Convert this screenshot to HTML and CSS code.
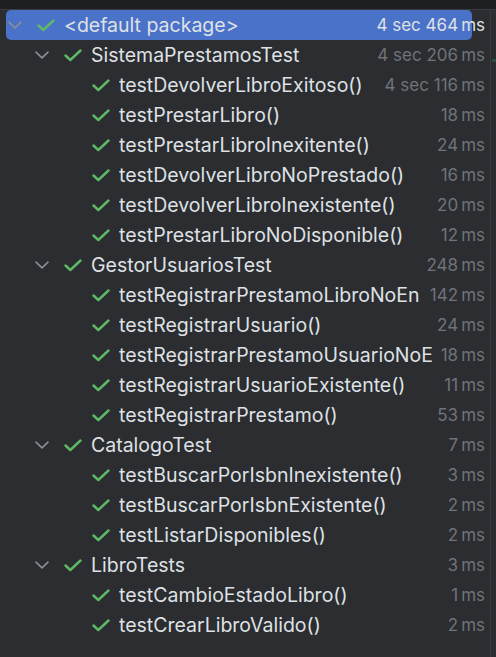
FILE: index.html
```html
<!DOCTYPE html>
<html>
<head>
<meta charset="utf-8">
<link rel="stylesheet" href="styles.css">
</head>
<body>
<svg width="0" height="0" class="defs">
  <defs>
    <symbol id="chev" viewBox="0 0 14 8"><path d="M1 1.2 L7 6.8 L13 1.2" fill="none" stroke="#8b8e95" stroke-width="1.6" stroke-linecap="round" stroke-linejoin="round"/></symbol>
    <symbol id="ok" viewBox="0 0 18 13"><path d="M1.5 6.5 L6.3 11 L16.5 1.5" fill="none" stroke="#5fb865" stroke-width="2.4" stroke-linecap="round" stroke-linejoin="round"/></symbol>
  </defs>
</svg>
<div class="topbar"></div>
<div class="panel">
  <div class="tree">
    <div class="row l0 selected"><svg class="chev"><use href="#chev"/></svg><svg class="ok"><use href="#ok"/></svg><span class="name">&lt;default package&gt;</span><span class="time">4 sec 464<span class="u">ms</span></span></div>

    <div class="row l1"><svg class="chev"><use href="#chev"/></svg><svg class="ok"><use href="#ok"/></svg><span class="name">SistemaPrestamosTest</span><span class="time">4 sec 206<span class="u">ms</span></span></div>
    <div class="row l2"><svg class="ok"><use href="#ok"/></svg><span class="name">testDevolverLibroExitoso()</span><span class="time">4 sec 116<span class="u">ms</span></span></div>
    <div class="row l2"><svg class="ok"><use href="#ok"/></svg><span class="name">testPrestarLibro()</span><span class="time">18<span class="u">ms</span></span></div>
    <div class="row l2"><svg class="ok"><use href="#ok"/></svg><span class="name">testPrestarLibroInexitente()</span><span class="time">24<span class="u">ms</span></span></div>
    <div class="row l2"><svg class="ok"><use href="#ok"/></svg><span class="name">testDevolverLibroNoPrestado()</span><span class="time">16<span class="u">ms</span></span></div>
    <div class="row l2"><svg class="ok"><use href="#ok"/></svg><span class="name">testDevolverLibroInexistente()</span><span class="time">20<span class="u">ms</span></span></div>
    <div class="row l2"><svg class="ok"><use href="#ok"/></svg><span class="name">testPrestarLibroNoDisponible()</span><span class="time">12<span class="u">ms</span></span></div>

    <div class="row l1"><svg class="chev"><use href="#chev"/></svg><svg class="ok"><use href="#ok"/></svg><span class="name">GestorUsuariosTest</span><span class="time">248<span class="u">ms</span></span></div>
    <div class="row l2"><svg class="ok"><use href="#ok"/></svg><span class="name">testRegistrarPrestamoLibroNoEn</span><span class="time">142<span class="u">ms</span></span></div>
    <div class="row l2"><svg class="ok"><use href="#ok"/></svg><span class="name">testRegistrarUsuario()</span><span class="time">24<span class="u">ms</span></span></div>
    <div class="row l2"><svg class="ok"><use href="#ok"/></svg><span class="name">testRegistrarPrestamoUsuarioNoE</span><span class="time">18<span class="u">ms</span></span></div>
    <div class="row l2"><svg class="ok"><use href="#ok"/></svg><span class="name">testRegistrarUsuarioExistente()</span><span class="time">11<span class="u">ms</span></span></div>
    <div class="row l2"><svg class="ok"><use href="#ok"/></svg><span class="name">testRegistrarPrestamo()</span><span class="time">53<span class="u">ms</span></span></div>

    <div class="row l1"><svg class="chev"><use href="#chev"/></svg><svg class="ok"><use href="#ok"/></svg><span class="name">CatalogoTest</span><span class="time">7<span class="u">ms</span></span></div>
    <div class="row l2"><svg class="ok"><use href="#ok"/></svg><span class="name">testBuscarPorIsbnInexistente()</span><span class="time">3<span class="u">ms</span></span></div>
    <div class="row l2"><svg class="ok"><use href="#ok"/></svg><span class="name">testBuscarPorIsbnExistente()</span><span class="time">2<span class="u">ms</span></span></div>
    <div class="row l2"><svg class="ok"><use href="#ok"/></svg><span class="name">testListarDisponibles()</span><span class="time">2<span class="u">ms</span></span></div>

    <div class="row l1"><svg class="chev"><use href="#chev"/></svg><svg class="ok"><use href="#ok"/></svg><span class="name">LibroTests</span><span class="time">3<span class="u">ms</span></span></div>
    <div class="row l2"><svg class="ok"><use href="#ok"/></svg><span class="name">testCambioEstadoLibro()</span><span class="time">1<span class="u">ms</span></span></div>
    <div class="row l2"><svg class="ok"><use href="#ok"/></svg><span class="name">testCrearLibroValido()</span><span class="time">2<span class="u">ms</span></span></div>
  </div>
  <div class="side"><div class="mark"></div></div>
</div>
</body>
</html>
```
FILE: styles.css
```css
html, body {
  margin: 0;
  padding: 0;
  background: #2b2d30;
  height: 100%;
  overflow: hidden;
}
.defs { position: absolute; width: 0; height: 0; }
body {
  font-family: Inter, "Noto Sans", sans-serif;
  font-size: 19.5px;
  color: #dfe1e5;
}
.topbar {
  height: 9px;
  background: #1e1f22;
  border-bottom: 1px solid #393b40;
}
.panel {
  display: flex;
  height: 647px;
}
.tree {
  width: 491px;
  flex: none;
  border-right: 1px solid #393b40;
  box-sizing: border-box;
}
.side { flex: 1; padding-top: 49px; }
.mark {
  height: 3px;
  margin-left: 1px;
  background: #2e4a42;
}
.row {
  position: relative;
  display: flex;
  align-items: center;
  height: 30px;
  padding-right: 5px;
  white-space: nowrap;
}
.row.selected::before {
  content: "";
  position: absolute;
  left: 6px;
  top: 0;
  width: 466px;
  height: 30px;
  border-radius: 5px;
  background: #4b72c9;
}
.row > * { position: relative; }
.chev {
  width: 14px;
  height: 8px;
  flex: none;
  margin-right: 15px;
}
.ok {
  width: 18px;
  height: 13px;
  flex: none;
  margin-right: 9px;
}
.l0 { padding-left: 8px; }
.l1 { padding-left: 35px; }
.l2 { padding-left: 92px; }
.name {
  flex: 1;
  min-width: 0;
  overflow: hidden;
  text-overflow: clip;
  line-height: 30px;
}
.time {
  flex: none;
  margin-left: 6px;
  font-size: 17px;
  color: #6f737a;
  line-height: 30px;
}
.selected .time { color: #dfe1e5; }
.u { margin-left: 3px; }
```
